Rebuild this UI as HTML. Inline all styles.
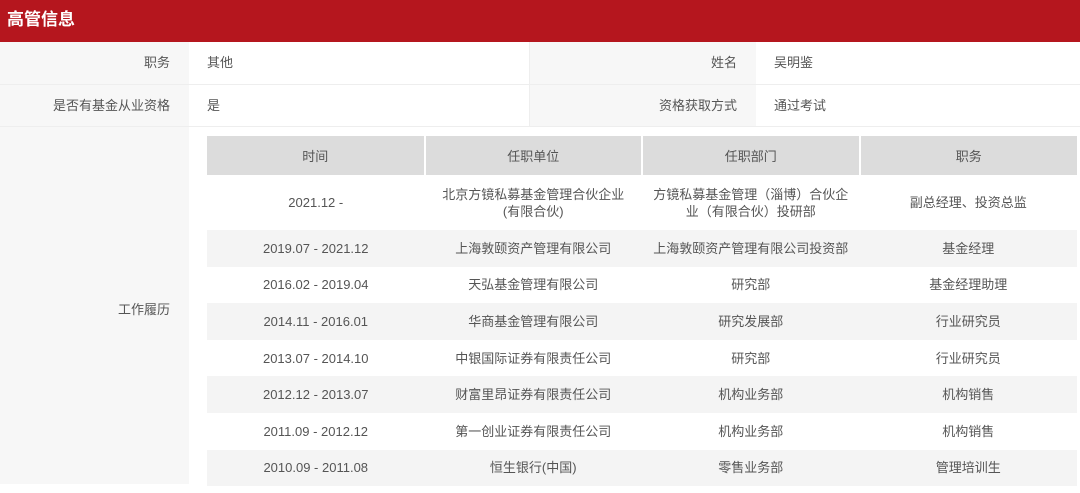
<!DOCTYPE html><html><head><meta charset="utf-8"><style>
*{margin:0;padding:0;box-sizing:border-box}
body{width:1080px;height:484px;overflow:hidden;background:#fff;font-family:"Liberation Sans","Noto Sans CJK SC",sans-serif;font-size:13px;color:#555}
.hd{position:absolute;left:0;top:0;width:1080px;height:42px;background:#b5161e;color:#fff;font-weight:bold;font-size:17px;line-height:40px;padding-left:7px}
.c{position:absolute;line-height:42px}
.lab{background:#f7f7f7;text-align:right;padding-right:19px}
.val{padding-left:18px;background:#fff}
.line{position:absolute;background:#eee}
table{position:absolute;left:207px;top:136px;width:870px;border-collapse:collapse;table-layout:fixed}
td,th{text-align:center;font-weight:normal;color:#555;padding:0 10px}
th{background:#dcdcdc;height:39px;border-left:2px solid #fff}
td{height:36.6px;line-height:17px}
tr.g td{background:#f4f4f4}
</style></head><body>
<div class="hd">高管信息</div>
<div class="c lab" style="left:0;top:42px;width:189px;height:43px">职务</div>
<div class="c val" style="left:189px;top:42px;width:340px;height:43px">其他</div>
<div class="c lab" style="left:529px;top:42px;width:227px;height:43px">姓名</div>
<div class="c val" style="left:756px;top:42px;width:324px;height:43px">吴明鉴</div>
<div class="c lab" style="left:0;top:85px;width:189px;height:42px">是否有基金从业资格</div>
<div class="c val" style="left:189px;top:85px;width:340px;height:42px">是</div>
<div class="c lab" style="left:529px;top:85px;width:227px;height:42px">资格获取方式</div>
<div class="c val" style="left:756px;top:85px;width:324px;height:42px">通过考试</div>
<div class="c lab" style="left:0;top:127px;width:189px;height:357px;line-height:366px">工作履历</div>
<div class="line" style="left:0;top:84px;width:1080px;height:1px"></div>
<div class="line" style="left:0;top:126px;width:1080px;height:1px"></div>
<div class="line" style="left:529px;top:42px;width:1px;height:85px"></div>
<table>
<tr><th style="border-left:0">时间</th><th>任职单位</th><th>任职部门</th><th>职务</th></tr>
<tr><td style="height:55px">2021.12 -</td><td>北京方镜私募基金管理合伙企业(有限合伙)</td><td>方镜私募基金管理（淄博）合伙企业（有限合伙）投研部</td><td>副总经理、投资总监</td></tr>
<tr class="g"><td>2019.07 - 2021.12</td><td>上海敦颐资产管理有限公司</td><td style="padding:0">上海敦颐资产管理有限公司投资部</td><td>基金经理</td></tr>
<tr><td>2016.02 - 2019.04</td><td>天弘基金管理有限公司</td><td>研究部</td><td>基金经理助理</td></tr>
<tr class="g"><td>2014.11 - 2016.01</td><td>华商基金管理有限公司</td><td>研究发展部</td><td>行业研究员</td></tr>
<tr><td>2013.07 - 2014.10</td><td>中银国际证券有限责任公司</td><td>研究部</td><td>行业研究员</td></tr>
<tr class="g"><td>2012.12 - 2013.07</td><td>财富里昂证券有限责任公司</td><td>机构业务部</td><td>机构销售</td></tr>
<tr><td>2011.09 - 2012.12</td><td>第一创业证券有限责任公司</td><td>机构业务部</td><td>机构销售</td></tr>
<tr class="g"><td>2010.09 - 2011.08</td><td>恒生银行(中国)</td><td>零售业务部</td><td>管理培训生</td></tr>
</table>
</body></html>
